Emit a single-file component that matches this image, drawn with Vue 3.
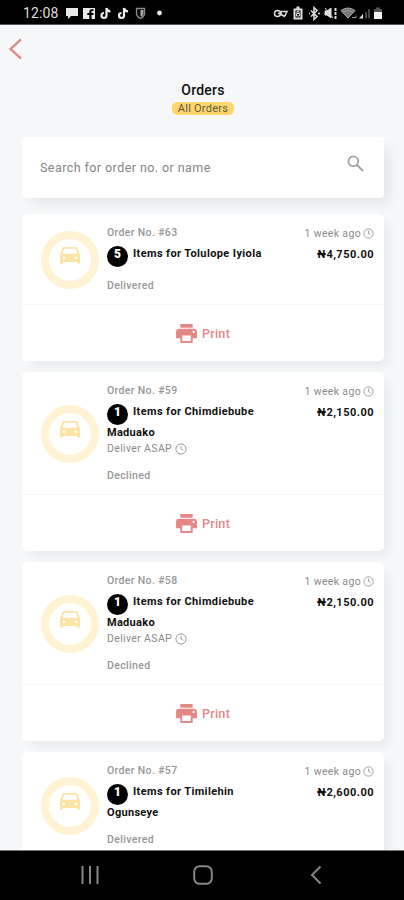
<script setup>
const orders = [
  { no: 63, count: 5, first: 'Tolulope Iyiola', last: '', asap: false, status: 'Delivered', price: '₦4,750.00' },
  { no: 59, count: 1, first: 'Chimdiebube', last: 'Maduako', asap: true, status: 'Declined', price: '₦2,150.00' },
  { no: 58, count: 1, first: 'Chimdiebube', last: 'Maduako', asap: true, status: 'Declined', price: '₦2,150.00' },
  { no: 57, count: 1, first: 'Timilehin', last: 'Ogunseye', asap: false, status: 'Delivered', price: '₦2,600.00' },
]
</script>

<template>
  <div class="phone">
    <header class="status">
      <span class="time">12:08</span>
      <svg class="left-icons" width="100" height="16" viewBox="0 0 100 16" fill="#e8e8e8">
        <path d="M1 3h12v8H6l-3 3v-3H1z" />
        <path d="M18 3h12v11h-3.500V10h2V8h-2V6.800q0-.8 1-.8h1V4.300h-2q-2.200 0-2.200 2.200V8h-2v2h2v4H18z" />
        <g fill="none" stroke="#eee" stroke-width="2.200">
          <path d="M41.500 3v7.500a2.500 2.500 0 1 1-2.500-2.500M41.500 3q.5 3 4 3.500" />
          <path d="M59 3v7.500a2.500 2.500 0 1 1-2.500-2.500M59 3q.5 3 4 3.500" />
        </g>
        <path d="M71.500 3.500h8v6q-1 3-4 4-3-1-4-4z" fill="none" stroke="#8b8b8b" stroke-width="1.300" />
        <path d="M75.500 5h3v4q-.5 2-3 3z" fill="#aaa" />
        <circle cx="94.500" cy="8" r="2.400" />
      </svg>
      <svg class="right-icons" width="112" height="16" viewBox="0 0 112 16" fill="none" stroke="#ddd" stroke-width="1.500">
        <circle cx="4.500" cy="8.500" r="3" />
        <path d="M5 8.500h3M8 6.500h6l-2.500 5-3.500-2z" />
        <path d="M21.500 4.500h7v9h-7zM23.500 2.500h3" stroke-width="2" />
        <path d="M23.500 8.500h3v2.500h-3zM24 8V6.500h2V8" stroke-width="1" />
        <path d="M38 5.500l6 6-3 3V2.500l3 3-6 6M36 8.500h1M45 8.500h2" />
        <path d="M52 6h2l4-3v10l-4-3h-2zM52 3l8 10" fill="#ddd" stroke-width="1" />
        <path d="M62.500 3v11" stroke-width="2" stroke-dasharray="3 1" />
        <path d="M68 5.500q7-5 14 0l-7 7.500z" fill="#777" stroke="#aaa" stroke-width="1" />
        <path d="M69.500 7.500q5.500-3.500 11 0M79 12.500h4v-2" stroke="#999" stroke-width="1" />
        <path d="M86 13.500h4V9z" fill="#ddd" stroke="none" />
        <path d="M92 13.500V7h2v6.500zM95 13.500V4h2v9.500z" fill="#444" stroke="none" />
        <path d="M101 4h2V2.500h4V4h2v4h-8z" fill="#555" stroke="none" />
        <path d="M101 7h8v7h-8z" fill="#f2f2f2" stroke="none" />
      </svg>
    </header>

    <main class="page">
      <svg class="back" width="15" height="22" viewBox="0 0 15 22" fill="none" stroke="#e18b89" stroke-width="2.400">
        <path d="M13 1.300 2.500 11 13 20.700" />
      </svg>
      <div class="heading">
        <h1>Orders</h1>
        <span class="pill">All Orders</span>
      </div>
      <div class="search">
        <span>Search for order no. or name</span>
        <svg width="17" height="17" viewBox="0 0 17 17" fill="none" stroke="#a2a2a2" stroke-width="1.800">
          <circle cx="6.300" cy="6.300" r="4.900" /><path d="M10 10l6 6" />
        </svg>
      </div>

      <section v-for="o in orders" :key="o.no" class="card">
        <div class="body">
          <div class="ring">
            <svg width="20" height="17" viewBox="0 0 20 18" preserveAspectRatio="none" fill="#fce4a4">
              <path fill-rule="evenodd" d="M4 0h12q1.200 0 1.600 1.200L20 8v9.500h-3V16H3v1.500H0V8l2.400-6.800Q2.800 0 4 0zm.3 1.800L2.500 7.200h15l-1.800-5.400zM4 10a1.400 1.400 0 1 0 .01 0zm12 0a1.400 1.400 0 1 0 .01 0z" />
            </svg>
          </div>
          <div class="info">
            <div class="no">Order No. #{{ o.no }}</div>
            <div class="items"><b class="count">{{ o.count }}</b><span>Items for {{ o.first }}</span></div>
            <div v-if="o.last" class="last">{{ o.last }}</div>
            <div v-if="o.asap" class="asap">
              Deliver ASAP
              <svg class="clock" width="12" height="12" viewBox="0 0 12 12"><circle cx="6" cy="6" r="5.100" /><path d="M6 2.800V6l2.300 1.400" /></svg>
            </div>
            <div class="state">{{ o.status }}</div>
          </div>
          <div class="side">
            <div class="ago">
              1 week ago
              <svg class="clock" width="11" height="11" viewBox="0 0 12 12"><circle cx="6" cy="6" r="5.100" /><path d="M6 2.800V6l2.300 1.400" /></svg>
            </div>
            <div class="price">{{ o.price }}</div>
          </div>
        </div>
        <div class="print">
          <svg width="21" height="19" viewBox="0 0 22 20" fill="#e38886">
            <path fill-rule="evenodd" d="M4.500 0h13v4h-13zM3.500 5h15Q22 5 22 8.500V15h-4.500v5h-13v-5H0V8.500Q0 5 3.500 5zM6.500 12v6h9v-6zM18.500 7.200a1.100 1.100 0 1 0 .01 0z" />
          </svg>
          <span>Print</span>
        </div>
      </section>
    </main>

    <nav class="nav">
      <svg width="18" height="20" viewBox="0 0 18 20" stroke="#858585" stroke-width="2"><path d="M1.500 1v18M9 1v18M16.500 1v18" /></svg>
      <svg class="home" width="20" height="20" viewBox="0 0 20 20" fill="none" stroke="#858585" stroke-width="2"><rect x="1.200" y="1.200" width="17.600" height="17.600" rx="5.500" /></svg>
      <svg width="12" height="20" viewBox="0 0 12 20" fill="none" stroke="#858585" stroke-width="2"><path d="M10.500 1.500 2 10l8.500 8.500" /></svg>
    </nav>
  </div>
</template>

<style>
body { background: #f5f7f9; }
</style>

<style scoped>
.phone {
  width: 404px;
  height: 900px;
  display: flex;
  flex-direction: column;
  overflow: hidden;
  font-family: Roboto, "Noto Sans", sans-serif;
  background: #f5f7f9;
}
.status {
  flex: none;
  height: 25px;
  box-sizing: border-box;
  padding: 1px 19px 0 23px;
  display: flex;
  align-items: center;
  background: #000;
  border-bottom: 1px solid #555;
}
.time { width: 42px; color: #ddd; font-size: 14px; letter-spacing: .15px; }
.left-icons { flex: none; }
.right-icons { margin-left: auto; flex: none; }
.page {
  flex: 1;
  min-height: 0;
  overflow: hidden;
  padding: 0 20px 0 22px;
  display: flex;
  flex-direction: column;
}
.back { flex: none; margin: 13px 0 0 -14px; }
.heading {
  flex: none;
  height: 77px;
  padding-top: 22px;
  box-sizing: border-box;
  display: flex;
  flex-direction: column;
  align-items: center;
}
h1 { margin: 0; font-size: 14px; line-height: 17px; font-weight: 500; letter-spacing: .25px; color: #111; }
.pill {
  margin-top: 3px;
  height: 13px;
  padding: 0 6px;
  border-radius: 5px;
  background: #ffd66b;
  color: #625a45;
  font-size: 11px;
  line-height: 13px;
  letter-spacing: .25px;
}
.search {
  flex: none;
  height: 61px;
  box-sizing: border-box;
  padding: 0 20px 0 18px;
  display: flex;
  justify-content: space-between;
  align-items: center;
  background: #fff;
  border-radius: 4px;
  box-shadow: 8px 8px 12px -3px #e1e5e5;
  color: #858585;
  font-size: 12.5px;
  letter-spacing: .43px;
  margin-bottom: 16px;
}
.search svg { margin-bottom: 8px; }
.card {
  flex: none;
  margin-bottom: 11px;
  background: #fff;
  border-radius: 5px;
  box-shadow: 7px 7px 10px -3px #e5e9ea;
}
.body {
  display: flex;
  padding: 12px 10px 11px 19px;
  border-bottom: 1px solid #f6f7f8;
}
.ring {
  flex: none;
  align-self: center;
  width: 58px;
  height: 58px;
  box-sizing: border-box;
  border: 8px solid #fff3d3;
  border-radius: 50%;
  display: flex;
  justify-content: center;
  padding-top: 8px;
  margin-right: 8px;
}
.info { flex: 1; white-space: nowrap; }
.no, .state, .ago, .asap { color: #8b8b8b; font-size: 10.5px; line-height: 14px; letter-spacing: .35px; }
.no, .state { font-weight: 500; color: #979797; }
.items {
  display: flex;
  height: 26px;
  box-sizing: border-box;
  padding-top: 6px;
  color: #111;
  font-size: 11px;
  line-height: 15px;
  font-weight: 700;
  letter-spacing: .38px;
}
.count {
  flex: none;
  width: 21px;
  height: 21px;
  margin-right: 5px;
  border-radius: 50%;
  background: #000;
  color: #fff;
  text-align: center;
  font-size: 12px;
  line-height: 17px;
  letter-spacing: 0;
}
.last { height: 16px; margin-top: 1px; color: #111; font-size: 11px; line-height: 16px; font-weight: 700; letter-spacing: .3px; }
.asap { display: flex; align-items: center; gap: 3px; height: 16px; }
.state { margin-top: 13px; }
.last + .state, .asap + .state { margin-top: 12px; }
.clock { flex: none; fill: none; stroke: #9a9a9a; stroke-width: 1; }
.side { text-align: right; padding-top: 1px; }
.ago { display: flex; align-items: center; justify-content: flex-end; gap: 2px; }
.ago .clock { margin-bottom: 2px; }
.price { margin-top: 6px; color: #111; font-size: 11px; line-height: 15px; font-weight: 700; letter-spacing: .48px; }
.print {
  height: 56px;
  display: flex;
  align-items: center;
  justify-content: center;
  gap: 5px;
  color: #e38886;
  font-size: 12.5px;
  letter-spacing: .3px;
  font-weight: 500;
}
.nav {
  flex: none;
  height: 50px;
  box-sizing: border-box;
  padding: 0 82px 2px 81px;
  display: flex;
  align-items: center;
  justify-content: space-between;
  background: #000;
  border-top: 1px solid #777;
}
.home { margin-right: 4px; }
</style>
